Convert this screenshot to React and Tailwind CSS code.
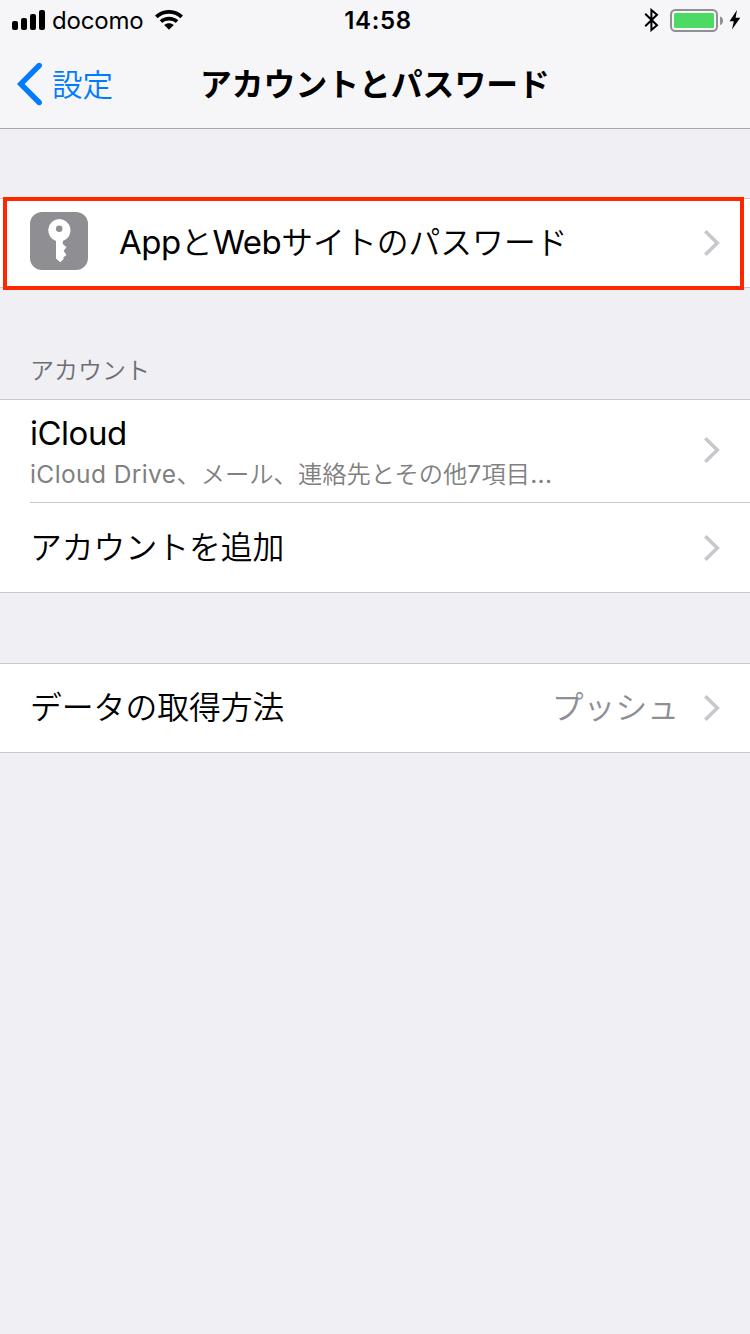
import React from "react";

function Chevron() {
  return (
    <svg className="block shrink-0" width="18" height="28" viewBox="0 0 18 28" fill="none">
      <path d="M2.3 2.3 L14.3 14 L2.3 25.7" stroke="#c7c7cc" strokeWidth="3.6" />
    </svg>
  );
}

function Latin({ children }) {
  return <span className="font-['Inter',sans-serif] text-[33px] font-normal tracking-[-0.5px]">{children}</span>;
}

function Jp({ children }) {
  return <span className="font-['Noto_Sans_CJK_JP',sans-serif] text-[31.8px] font-[350]">{children}</span>;
}

function SmallLatin({ children }) {
  return <span className="font-['Inter',sans-serif] text-[24.5px] font-normal tracking-[0.4px]">{children}</span>;
}

function StatusBar() {
  return (
    <div className="flex h-10 items-center pl-3 pr-[9px]">
      <div className="flex flex-1 items-center">
        <svg className="block" width="34" height="20" viewBox="0 0 34 20">
          <rect x="0" y="11" width="6" height="9" rx="2" />
          <rect x="9" y="8" width="6" height="12" rx="2" />
          <rect x="18" y="4" width="6" height="16" rx="2" />
          <rect x="27" y="0" width="6" height="20" rx="2" />
        </svg>
        <span className="ml-[6px] w-[92px] pt-[2px] font-['Inter',sans-serif] text-[24px] leading-[38px] tracking-[-0.2px]">docomo</span>
        <svg className="ml-[11px] block" width="28" height="20" viewBox="0 0 28 20">
          <path d="M0 5.6 C8 -1.9 20 -1.9 28 5.6 L25.4 8.2 C19 2.3 9 2.3 2.6 8.2 Z" />
          <path d="M4.7 10.3 C10 5.5 18 5.5 23.3 10.3 L20.7 12.9 C17 9.7 11 9.7 7.3 12.9 Z" />
          <path d="M9.2 15 C12 12.7 16 12.7 18.8 15 L14 19.8 Z" />
        </svg>
      </div>
      <span className="pl-[3px] pt-[2px] font-['Inter',sans-serif] text-[24px] font-semibold leading-[38px] tracking-[0.7px]">14:58</span>
      <div className="flex flex-1 items-center justify-end">
        <svg className="block" width="15" height="24" viewBox="0 0 15 24" fill="none" stroke="#000" strokeWidth="2">
          <path d="M1.2 5.8 L13 17.3 L7.4 22 V2 L13 6.7 L1.2 18.2" />
        </svg>
        <svg className="ml-[11px] block" width="54" height="24" viewBox="0 0 54 24">
          <rect x="1" y="2" width="46" height="21" rx="4.5" fill="none" stroke="#8f8f94" strokeWidth="2" />
          <rect x="4" y="5" width="40" height="15" rx="1.5" fill="#4cd964" />
          <path d="M50 8.5 C54 9.5 54 16 50 17 Z" fill="#8f8f94" />
        </svg>
        <svg className="ml-[5px] block" width="12" height="20" viewBox="0 0 12 20">
          <path d="M8 0 L0.5 11.2 H4.8 L3 19.5 L11.3 7.8 H6.6 Z" />
        </svg>
      </div>
    </div>
  );
}

function NavBar() {
  return (
    <div className="flex h-[88px] items-center pl-[17px]">
      <div className="flex w-[183px] items-center">
        <svg className="block" width="26" height="44" viewBox="0 0 26 44" fill="none">
          <path d="M22.2 3.5 L3.7 22 L22.2 40.5" stroke="#007aff" strokeWidth="5.4" strokeLinecap="round" />
        </svg>
        <span className="ml-[9px] pb-[2px] font-['Noto_Sans_CJK_JP',sans-serif] text-[30.5px] font-[350] leading-[44px] text-[#007aff]">設定</span>
      </div>
      <h1 className="whitespace-nowrap pb-[4px] font-['Noto_Sans_CJK_JP',sans-serif] text-[31.8px] font-bold leading-[44px]">アカウントとパスワード</h1>
    </div>
  );
}

function KeyIcon() {
  return (
    <svg className="block shrink-0" width="58" height="58" viewBox="0 0 58 58">
      <rect width="58" height="58" rx="12" fill="#8e8e93" />
      <path
        fill="#fff"
        fillRule="evenodd"
        d="M29.3 7 A11.3 11.3 0 0 1 32.8 29 V32 L36.5 35.2 L33.6 38.8 L36.5 43 L33.2 45.6 L33.8 46.8 L30.3 50.3 L26 46.5 V29 A11.3 11.3 0 0 1 29.3 7 Z M29.2 13.5 A3.2 3.2 0 1 0 29.2 19.9 A3.2 3.2 0 1 0 29.2 13.5 Z"
      />
    </svg>
  );
}

export default function App() {
  return (
    <div className="flex h-[1334px] w-[750px] flex-col overflow-hidden bg-[#efeff4] text-black">
      <header className="h-[129px] border-b border-[#a7a7ac] bg-[#f6f6f8]">
        <StatusBar />
        <NavBar />
      </header>

      <section className="relative mt-[69px] flex h-[90px] items-center border-y border-[#c8c7cc] bg-white pl-[30px] pr-[29px]">
        <div className="flex flex-1 items-center pb-1">
          <KeyIcon />
          <span className="ml-[31px] whitespace-nowrap pt-[5px] leading-[44px]">
            <Latin>App</Latin><Jp>と</Jp><Latin>Web</Latin><Jp>サイトのパスワード</Jp>
          </span>
        </div>
        <Chevron />
        <div className="absolute -top-[2px] left-[3px] h-[93px] w-[741px] border-4 border-[#ff2600]" />
      </section>

      <h2 className="mt-[65px] h-[46px] pl-[30px] font-['Noto_Sans_CJK_JP',sans-serif] text-[24px] font-[350] leading-[32px] text-[#6d6d72]">アカウント</h2>

      <section className="border-y border-[#c8c7cc] bg-white pl-[30px]">
        <div className="flex h-[103px] items-center border-b border-[#c8c7cc] pb-[2px] pr-[29px]">
          <div className="flex flex-1 flex-col">
            <span className="pt-[8px] leading-[40px]"><Latin>iCloud</Latin></span>
            <span className="-mt-[3px] whitespace-nowrap pb-[5px] font-['Noto_Sans_CJK_JP',sans-serif] text-[24.3px] font-[350] leading-[34px] text-[#808080]"><SmallLatin>iCloud Drive</SmallLatin>、メール、連絡先とその他<SmallLatin>7</SmallLatin>項目<SmallLatin>...</SmallLatin></span>
          </div>
          <Chevron />
        </div>
        <div className="flex h-[89px] items-center pr-[29px]">
          <span className="flex-1 pt-[2px] leading-[44px]"><Jp>アカウントを追加</Jp></span>
          <Chevron />
        </div>
      </section>

      <section className="mt-[70px] flex h-[90px] items-center border-y border-[#c8c7cc] bg-white pl-[30px] pr-[29px]">
        <span className="flex-1 pt-[2px] leading-[44px]"><Jp>データの取得方法</Jp></span>
        <span className="mr-[24px] pt-[2px] leading-[44px] text-[#8e8e93]"><Jp>プッシュ</Jp></span>
        <Chevron />
      </section>
    </div>
  );
}
